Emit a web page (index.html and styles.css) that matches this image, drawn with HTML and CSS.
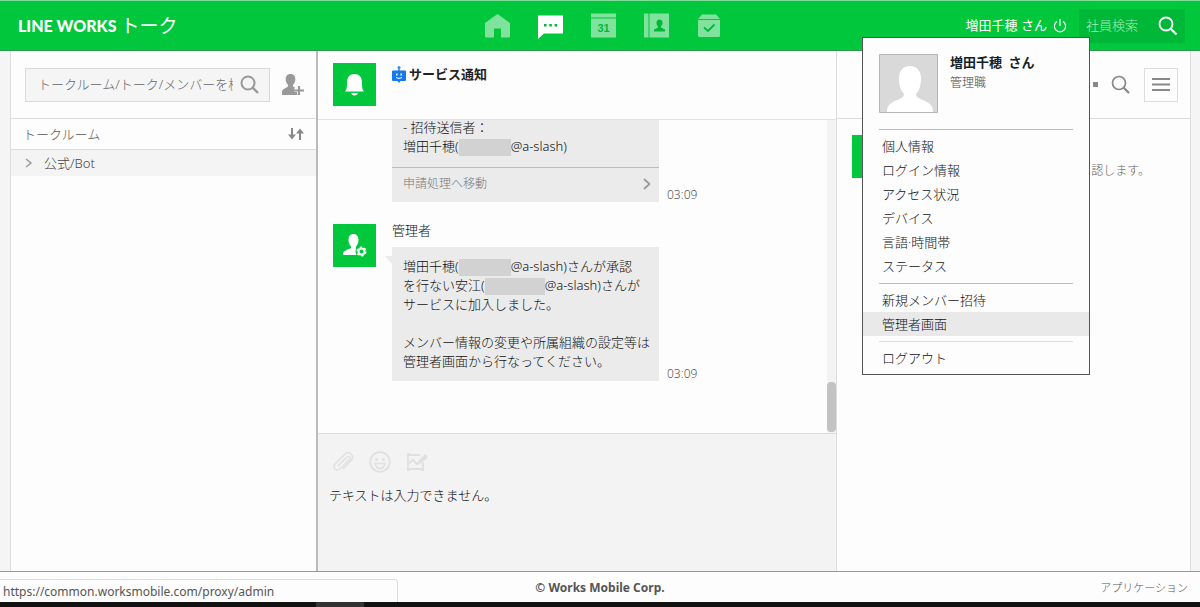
FILE: index.html
```
<!DOCTYPE html>
<html lang="ja">
<head>
<meta charset="utf-8">
<title>LINE WORKS トーク</title>
<link rel="stylesheet" href="styles.css">
</head>
<body>
<header class="topbar">
  <a class="brand" href="#"><span class="brand-name">LINE WORKS</span><span class="brand-service">トーク</span></a>
  <nav class="services">
    <a class="service" href="#" aria-label="ホーム"><svg viewBox="0 0 25 25"><path d="M12.500 1 25 10v13q0 1.500-1.500 1.500H16v-9H9v9H1.500Q0 24.500 0 23V10z" fill="currentColor"/></svg></a>
    <a class="service service-active" href="#" aria-label="トーク"><svg viewBox="0 0 25 25"><path d="M0 2.500h25v18H6L0 26z" fill="currentColor"/><path d="M6 11h2.500v2.500H6zM11.300 11h2.500v2.500h-2.500zM16.600 11h2.500v2.500h-2.500z" fill="#00b838"/></svg></a>
    <a class="service" href="#" aria-label="カレンダー"><svg viewBox="0 0 25 25"><path d="M0 .5h25v4H0zM0 5.500h25v19H0z" fill="currentColor"/><text class="day" x="12.500" y="19" text-anchor="middle">31</text></svg></a>
    <a class="service" href="#" aria-label="アドレス帳"><svg viewBox="0 0 25 25"><path d="M0 .5h4.500v24H0zM5.500.5H25v24H5.500z" fill="currentColor"/><path d="M15.500 6.500c2 0 3 1.500 3 3.500 0 1.600-.7 2.600-1.500 3.500v1l4 2v2H10v-2l4-2v-1c-.8-.9-1.500-1.900-1.500-3.500 0-2 1-3.500 3-3.500z" fill="#00b838"/></svg></a>
    <a class="service" href="#" aria-label="タスク"><svg viewBox="0 0 25 25"><path d="M5 1.500h14L23 6H1zM1 7h22v15.500q0 1.500-1.500 1.500h-19Q1 24 1 22.500z" fill="currentColor"/><path d="m7 14.500 4 3.500 6.500-6.500" fill="none" stroke="#00b838" stroke-width="1.800"/></svg></a>
  </nav>
  <div class="account">
    <button class="user" type="button">増田千穂 さん
      <svg class="power" viewBox="0 0 14 14"><path d="M4 2.500a5.600 5.600 0 1 0 6 0M7 0v7" fill="none" stroke="currentColor" stroke-width="1.200"/></svg>
    </button>
    <form class="staff-search">
      <input type="text" placeholder="社員検索" aria-label="社員検索">
      <button type="button" aria-label="検索"><svg viewBox="0 0 20 20"><circle cx="8" cy="8" r="6.500" fill="none" stroke="currentColor" stroke-width="1.800"/><path d="m12.500 12.500 6 6" stroke="currentColor" stroke-width="2.400"/></svg></button>
    </form>
  </div>
  <section class="user-menu" aria-label="ユーザーメニュー">
    <div class="profile">
      <svg class="avatar" viewBox="0 0 59 59"><path d="M.5.500h58v58H.5z" fill="#d9d9d9" stroke="#b4b4b4"/><path d="M31 12c-7 0-11 5-11 12 0 8 2 13 5 16 0 4-5 5-9 7-6 3-8 5-8 11h46c0-6-2-8-8-11-4-2-9-3-9-7 3-3 5-8 5-16 0-7-4-12-11-12z" fill="#fff"/></svg>
      <div>
        <strong class="profile-name">増田千穂&ensp;さん</strong>
        <span class="profile-role">管理職</span>
      </div>
    </div>
    <hr>
    <a href="#">個人情報</a>
    <a href="#">ログイン情報</a>
    <a href="#">アクセス状況</a>
    <a href="#">デバイス</a>
    <a href="#">言語·時間帯</a>
    <a href="#">ステータス</a>
    <hr>
    <a href="#">新規メンバー招待</a>
    <a class="current" href="#">管理者画面</a>
    <hr class="faint">
    <a href="#">ログアウト</a>
  </section>
</header>

<main class="workspace">
  <aside class="rooms">
    <div class="rooms-tools">
      <form class="room-search">
        <input type="text" placeholder="トークルーム/トーク/メンバーを検索" aria-label="トークルーム検索">
        <button type="button" aria-label="検索"><svg viewBox="0 0 20 20"><circle cx="8" cy="8" r="6.500" fill="none" stroke="currentColor" stroke-width="2"/><path d="m12.500 12.500 5.500 5.500" stroke="currentColor" stroke-width="2.400"/></svg></button>
      </form>
      <button class="invite" type="button" aria-label="メンバー追加"><svg viewBox="0 0 22 22"><path d="M8.500 0c3.300 0 4.800 2.200 4.800 5.200 0 2.600-.9 4.300-2.300 5.600v1.700l2.500 1.500v4h3V21H0v-3c0-2.800 3-3.500 6-5.500v-1.700C4.600 9.500 3.700 7.800 3.700 5.200 3.700 2.200 5.200 0 8.500 0z" fill="currentColor"/><path d="M17 11.500v9M12.500 16H22" stroke="#fdfdfd" stroke-width="4"/><path d="M17 12v9M12.500 16.500H22" stroke="currentColor" stroke-width="2.200"/></svg></button>
    </div>
    <div class="rooms-head">
      <span>トークルーム</span>
      <button type="button" aria-label="並べ替え"><svg viewBox="0 0 16 12"><path d="M4 0v9M12 12V3" stroke="currentColor" stroke-width="2"/><path d="M0 6.500h8l-4 5zM8 5.500h8l-4-5z" fill="currentColor"/></svg></button>
    </div>
    <a class="room-group" href="#"><svg viewBox="0 0 8 10"><path d="m1 1 5 4-5 4" fill="none" stroke="currentColor" stroke-width="1.500"/></svg>公式/Bot</a>
  </aside>

  <section class="chat">
    <header class="chat-head">
      <span class="tile"><svg viewBox="0 0 43 43"><path d="M21.500 11c6 0 7.500 4.500 7.500 9 0 5 .5 6.500 2 8.500H12c1.500-2 2-3.500 2-8.500 0-4.500 1.500-9 7.500-9zM18 30h7q-1 2.500-3.500 2.500T18 30z" fill="#fff"/></svg></span>
      <h1><svg viewBox="0 0 14 17"><path d="M1 4.500h12q1 0 1 1V14q0 1-1 1H8.500L7 17l-1.500-2H1q-1 0-1-1V5.500q0-1 1-1zM6.300 2h1.400v3H6.300z" fill="#1479ec"/><circle cx="7" cy="1.500" r="1.500" fill="#3c8eea"/><path d="M4 7.500h1.600v2H4zM8.400 7.500H10v2H8.400z" fill="#fff"/><path d="M4 11.500q3 2 6 0" fill="none" stroke="#fff"/></svg>サービス通知</h1>
    </header>
    <div class="messages">
      <article class="message">
        <span class="tile-space"></span>
        <div class="bubble bubble-notice">
          <p>- 招待送信者：<br>増田千穂(<span class="mask"></span>@a-slash)</p>
          <a class="bubble-link" href="#">申請処理へ移動<svg viewBox="0 0 8 12"><path d="m1 1 5.500 5L1 11" fill="none" stroke="currentColor" stroke-width="1.700"/></svg></a>
        </div>
        <time>03:09</time>
      </article>
      <article class="message">
        <span class="tile"><svg viewBox="0 0 43 43"><path d="M20.500 10c3.500 0 5 2.500 5 6 0 3-1 5-2.500 6.500v2l2 1.500v5H10v-1.500c0-3 4.500-3.500 8-5.500v-1.500c-1.500-1.500-2.500-3.500-2.500-6.500 0-3.500 1.500-6 5-6z" fill="#fff"/><circle cx="28.500" cy="27.500" r="6" fill="#00c73c"/><circle cx="28.500" cy="27.500" r="3" fill="none" stroke="#fff" stroke-width="2"/><circle cx="28.500" cy="27.500" r="4.300" fill="none" stroke="#fff" stroke-width="1.500" stroke-dasharray="2.250 2.250"/></svg></span>
        <div>
          <h2>管理者</h2>
          <div class="bubble bubble-tail">
            <p>増田千穂(<span class="mask"></span>@a-slash)さんが承認<br>を行ない安江(<span class="mask mask-wide"></span>@a-slash)さんが<br>サービスに加入しました。<br><br>メンバー情報の変更や所属組織の設定等は<br>管理者画面から行なってください。</p>
          </div>
        </div>
        <time>03:09</time>
      </article>
      <span class="scrollbar"></span>
    </div>
    <div class="composer">
      <div class="composer-tools">
        <button type="button" aria-label="ファイル添付" disabled><svg viewBox="0 0 22 22"><path d="m6 15 9-9q1.500-1 2.500 0t0 2.500l-9.500 9.500q-3 2-5 0t0-5L13 3q3-2.500 6 0t.5 6L11 18" fill="none" stroke="currentColor" stroke-width="1.500"/></svg></button>
        <button type="button" aria-label="スタンプ" disabled><svg viewBox="0 0 22 22"><circle cx="11" cy="11" r="9.800" fill="none" stroke="currentColor" stroke-width="1.800"/><circle cx="7.500" cy="8.500" r="1.500" fill="currentColor"/><circle cx="14.500" cy="8.500" r="1.500" fill="currentColor"/><path d="M6 12.500h10q-1 5-5 5t-5-5z" fill="none" stroke="currentColor" stroke-width="1.500"/></svg></button>
        <button type="button" aria-label="画像編集" disabled><svg viewBox="0 0 22 22"><path d="M14 4H2v14h15v-6M2 13l5-4 4 4 3-2" fill="none" stroke="currentColor" stroke-width="1.800"/><path d="M1 2h3v3H1zM1 17h3v3H1zM15 17h3v3h-3zM12 13l1-4 6-6 3 3-6 6z" fill="currentColor"/></svg></button>
      </div>
      <p>テキストは入力できません。</p>
    </div>
  </section>

  <aside class="detail">
    <div class="detail-head">
      <span class="dot"></span>
      <button class="find" type="button" aria-label="検索"><svg viewBox="0 0 20 20"><circle cx="8" cy="8" r="6.500" fill="none" stroke="currentColor" stroke-width="1.700"/><path d="m12.500 12.500 5.500 5.500" stroke="currentColor" stroke-width="2.200"/></svg></button>
      <button class="more" type="button" aria-label="メニュー"><svg viewBox="0 0 18 13"><path d="M0 1h18M0 6.500h18M0 12h18" stroke="currentColor" stroke-width="2"/></svg></button>
    </div>
    <div class="detail-body"><span class="tile"></span><p>認します。</p></div>
  </aside>
</main>

<footer class="footer">
  <small>© Works Mobile Corp.</small>
  <a href="#">アプリケーション</a>
  <div class="link-status">https://common.worksmobile.com/proxy/admin</div>
</footer>
<div class="taskbar"><span></span></div>
</body>
</html>
```
FILE: styles.css
```
* { box-sizing: border-box; }

body {
  margin: 0;
  height: 100vh;
  display: flex;
  flex-direction: column;
  background: #fdfdfd;
  color: #111;
  font: 300 13px/19px "Noto Sans", "Noto Sans CJK JP", sans-serif;
  overflow: hidden;
}

p, h1, h2 { margin: 0; font-size: 13px; }
a { color: inherit; text-decoration: none; }
svg { display: block; flex: none; }
button, input {
  margin: 0;
  padding: 0;
  border: 0;
  background: none;
  color: inherit;
  font: inherit;
}
input { min-width: 0; flex: 1; outline: 0; }

/* Top bar */
.topbar {
  position: relative;
  z-index: 2;
  flex: none;
  height: 51px;
  display: grid;
  grid-template-columns: 1fr auto 1fr;
  align-items: center;
  padding: 0 15px 0 18px;
  border-top: 1px solid #7fdf9a;
  border-bottom: 1px solid #2c9a4c;
  background: #00c73c;
  color: #fff;
}
.brand { display: flex; align-items: center; gap: 4px; }
.brand-name { font: 900 16px/24px Lato, sans-serif; }
.brand-service { font-size: 19px; line-height: 24px; font-weight: 400; }
.services { display: flex; gap: 28px; margin-left: 4px; }
.service { color: #80e39d; }
.service-active { color: #fff; }
.service svg { width: 25px; height: 25px; overflow: visible; }
.day { font: 700 11px "Liberation Sans", sans-serif; fill: #00b838; }
.account { display: flex; justify-content: flex-end; align-items: center; gap: 12px; }
.user { display: flex; align-items: center; gap: 6px; font-weight: 400; }
.power { width: 14px; height: 14px; }
.staff-search {
  display: flex;
  align-items: center;
  width: 106px;
  height: 34px;
  padding: 0 7px;
  background: #00b838;
}
.staff-search input::placeholder { color: #a5ecb9; opacity: 1; }
.staff-search svg { width: 20px; height: 20px; }

/* User menu */
.user-menu {
  position: absolute;
  top: 36px;
  right: 110px;
  width: 228px;
  padding: 16px 0 4px;
  border: 1px solid #555;
  background: #fdfdfd;
  color: #111;
}
.profile { display: flex; gap: 12px; padding: 0 16px 11px; }
.avatar { width: 59px; height: 59px; }
.profile-name, .profile-role { display: block; line-height: 16px; }
.profile-name { font-weight: 700; color: #12222b; }
.profile-role { margin-top: 5px; font-size: 12px; color: #444; }
.user-menu hr { margin: 5px 16px 4px; border: 0; border-top: 1px solid #bbb; }
.user-menu .faint { border-color: #ddd; }
.user-menu a { display: block; padding: 0 19px; line-height: 24px; }
.user-menu .current { background: #e9e9e9; }

/* Workspace */
.workspace {
  flex: 1;
  min-height: 0;
  display: grid;
  grid-template-columns: 308px 519px 1fr;
  padding: 0 9px 0 10px;
  background: #f5f5f5;
}
.rooms { background: #fdfdfd; border: solid #ddd; border-width: 0 0 0 1px; border-right: 2px solid #bbb; }
.rooms-tools {
  display: flex;
  align-items: center;
  gap: 12px;
  height: 68px;
  padding: 0 12px 0 14px;
  border-bottom: 1px solid #ddd;
}
.room-search {
  flex: 1;
  min-width: 0;
  display: flex;
  align-items: center;
  gap: 7px;
  height: 34px;
  padding: 0 9px 0 12px;
  border: 1px solid #d9d9d9;
  background: #f5f5f5;
  color: #999;
}
.room-search input::placeholder { color: #666; opacity: 1; }
.room-search svg { width: 20px; height: 20px; }
.invite { color: #999; }
.invite svg { width: 22px; height: 22px; }
.rooms-head {
  display: flex;
  justify-content: space-between;
  align-items: center;
  height: 31px;
  padding: 0 12px;
  border-bottom: 1px solid #ddd;
  color: #555;
}
.rooms-head button { color: #888; }
.rooms-head svg { width: 16px; height: 12px; }
.room-group {
  display: flex;
  align-items: center;
  gap: 11px;
  height: 26px;
  padding: 0 14px;
  background: #f4f4f4;
  color: #444;
}
.room-group svg { width: 8px; height: 10px; color: #999; }

/* Chat */
.chat { display: flex; flex-direction: column; min-width: 0; min-height: 0; border-right: 1px solid #ddd; background: #fdfdfd; }
.chat-head {
  flex: none;
  display: flex;
  gap: 16px;
  height: 69px;
  padding: 12px 15px;
  border-bottom: 1px solid #e3e3e3;
}
.chat-head h1 { display: flex; align-items: center; gap: 3px; height: 22px; color: #222; }
.chat-head h1 svg { width: 14px; height: 17px; }
.tile { flex: none; width: 43px; height: 43px; background: #00c73c; }
.tile-space { flex: none; width: 43px; }
.messages {
  position: relative;
  isolation: isolate;
  flex: 1;
  min-height: 0;
  display: flex;
  flex-direction: column;
  justify-content: flex-end;
  gap: 22px;
  padding: 0 15px 52px;
  overflow: hidden;
}
.messages::after { content: ""; position: absolute; z-index: -1; top: 0; right: 0; bottom: 0; width: 9px; background: #f3f3f3; }
.message { flex: none; display: flex; gap: 16px; }
.message h2 { padding-bottom: 10px; line-height: 13px; font-weight: 300; }
.bubble { position: relative; width: 267px; background: #ebebeb; }
.bubble p { padding: 10px 11px; white-space: nowrap; }
.bubble-tail::before {
  content: "";
  position: absolute;
  top: 9px;
  left: -7px;
  border-right: 7px solid #ebebeb;
  border-bottom: 8px solid transparent;
}
.bubble-notice p { padding-bottom: 11px; }
.bubble-link {
  display: flex;
  justify-content: space-between;
  align-items: center;
  height: 35px;
  padding: 0 8px 2px 11px;
  border-top: 1px solid #bbb;
  font-size: 12px;
  color: #777;
}
.bubble-link svg { width: 8px; height: 12px; color: #999; }
.mask { display: inline-block; width: 52px; height: 17px; vertical-align: middle; background: #d2d2d2; }
.mask-wide { width: 60px; }
.message time { align-self: flex-end; margin-left: -8px; line-height: 15px; font-size: 12px; color: #555; }
.scrollbar { position: absolute; right: 0; bottom: 1px; width: 9px; height: 50px; border-radius: 4px; background: #c3c3c3; }
.composer { flex: none; height: 138px; padding: 17px 11px; border-top: 1px solid #ddd; background: #f3f3f3; }
.composer-tools { display: flex; gap: 15px; padding: 0 3px; color: #e0e0e0; }
.composer-tools svg { width: 22px; height: 22px; }
.composer p { margin-top: 13px; }

/* Detail */
.detail { background: #fdfdfd; border-right: 1px solid #ddd; }
.detail-head {
  display: flex;
  justify-content: flex-end;
  align-items: center;
  gap: 13px;
  height: 68px;
  padding-right: 12px;
  border-bottom: 1px solid #ddd;
  color: #888;
}
.dot { width: 5px; height: 5px; background: #888; }
.find svg { width: 20px; height: 20px; }
.more { display: grid; place-items: center; width: 34px; height: 34px; border: 1px solid #ddd; }
.more svg { width: 18px; height: 13px; }
.detail-body { display: flex; justify-content: space-between; padding: 16px 40px 0 15px; color: #666; }
.detail-body p { padding-top: 26px; font-size: 12px; }

/* Footer */
.footer {
  position: relative;
  flex: none;
  display: grid;
  grid-template-columns: 1fr auto 1fr;
  align-items: center;
  height: 31px;
  padding: 0 12px;
  border-top: 1px solid #999;
  background: #fdfdfd;
  color: #555;
}
.footer small { grid-column: 2; font-size: 12px; font-weight: 700; }
.footer a { justify-self: end; font-size: 11px; }
.link-status {
  position: absolute;
  left: 0;
  bottom: 0;
  width: 398px;
  padding: 2px 3px 1px;
  border: 1px solid #ddd;
  border-width: 1px 1px 0 0;
  border-radius: 0 4px 0 0;
  background: #fdfdfd;
  font-size: 12px;
  font-weight: 400;
}
.taskbar { flex: none; height: 5px; padding-left: 316px; background: #111; }
.taskbar span { display: block; width: 48px; height: 5px; background: #333; }
```
